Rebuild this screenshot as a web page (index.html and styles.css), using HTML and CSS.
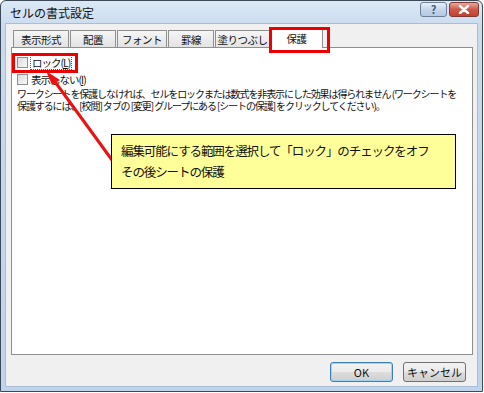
FILE: index.html
```html
<!DOCTYPE html>
<html lang="ja">
<head>
    <meta charset="UTF-8">
    <title>セルの書式設定</title>
    <link rel="stylesheet" href="styles.css">
</head>
<body>
    <div class="window">
        <div class="titlebar">
            <span class="title">セルの書式設定</span>
            <div class="caption-buttons">
                <span class="cap-btn help">?</span>
                <span class="cap-btn close">
                    <svg width="14" height="9" viewBox="0 0 14 9"><path d="M3 1 L11 8 M11 1 L3 8" stroke="#fff" stroke-width="2.4" stroke-linecap="round"/></svg>
                </span>
            </div>
        </div>
        <div class="client">
            <div class="tabs">
                <div class="tab t1">表示形式</div>
                <div class="tab t2">配置</div>
                <div class="tab t3">フォント</div>
                <div class="tab t4">罫線</div>
                <div class="tab t5">塗りつぶし</div>
                <div class="tab active">保護</div>
            </div>
            <div class="panel">
                <label class="check-row">
                    <span class="box"></span><span class="focus">ロック(<u>L</u>)</span>
                </label>
                <label class="check-row">
                    <span class="box"></span><span>表示しない(<u>I</u>)</span>
                </label>
                <p class="note">ワークシートを保護しなければ、セルをロックまたは数式を非表示にした効果は得られません (ワークシートを<br>保護するには、[校閲] タブの [変更] グループにある [シートの保護] をクリックしてください)。</p>
            </div>
            <div class="footer">
                <button class="btn default">OK</button>
                <button class="btn">キャンセル</button>
            </div>
        </div>

        <!-- annotations drawn over the dialog -->
        <div class="mark mark-tab"></div>
        <div class="mark mark-lock"></div>
        <svg class="arrow" width="484" height="393" viewBox="0 0 484 393">
            <line x1="53" y1="79" x2="112" y2="160" stroke="#ee1111" stroke-width="3"/>
            <polygon points="46,71 60,80 52,85" fill="#ee1111"/>
        </svg>
        <div class="callout">編集可能にする範囲を選択して「ロック」のチェックをオフ<br>その後シートの保護</div>
    </div>
</body>
</html>
```

FILE: styles.css
```css
* {
    box-sizing: border-box;
}

body {
    margin: 0;
    font-family: "Noto Sans CJK JP", "Liberation Sans", sans-serif;
    background: #ffffff;
}

.window {
    position: relative;
    width: 483px;
    height: 392px;
    border: 1px solid #3c4a58;
    border-radius: 6px 6px 0 0;
    background: linear-gradient(#dce8f5, #c7daee 30px, #bfd4eb);
    padding: 0 4px 4px 4px;
    display: flex;
    flex-direction: column;
}

.titlebar {
    height: 22px;
    display: flex;
    align-items: center;
    justify-content: space-between;
    padding-left: 5px;
}

.title {
    font-size: 12px;
    color: #111;
}

.caption-buttons {
    display: flex;
    gap: 2px;
    margin-top: -6px;
    margin-right: -1px;
}

.cap-btn {
    height: 15px;
    border: 1px solid #6d7f96;
    border-radius: 3px;
    display: flex;
    align-items: center;
    justify-content: center;
}

.help {
    width: 27px;
    background: linear-gradient(#e9f0f8, #c6d6ea 50%, #b3c8e2);
    font-size: 11px;
    font-weight: bold;
    color: #3d5a80;
}

.close {
    width: 30px;
    border-color: #7c3a33;
    background: linear-gradient(#e9a99e, #d0574a 50%, #c2402f);
}

.client {
    flex: 1;
    background: #f0f0f0;
    padding: 4px 4px 0 5px;
    border: 1px solid #a9bdd4;
}

.tabs {
    display: flex;
    align-items: flex-end;
    height: 19px;
    padding-left: 2px;
    font-size: 10.5px;
    letter-spacing: -0.5px;
    white-space: nowrap;
}

.tab {
    height: 17px;
    border: 1px solid #8e8f8f;
    border-bottom: none;
    margin-right: 1px;
    background: linear-gradient(#f6f6f6, #e3e3e3);
    display: flex;
    align-items: center;
    justify-content: center;
    color: #111;
}

.t1 { width: 56px; }
.t2 { width: 46px; }
.t3 { width: 50px; }
.t4 { width: 46px; }
.t5 { width: 55px; }

.tab.active {
    width: 53px;
    height: 20px;
    background: #ffffff;
    position: relative;
    top: 1px;
    margin-left: -1px;
}

.panel {
    height: 308px;
    background: #ffffff;
    border: 1px solid #8e8f8f;
    padding: 6px 6px 0 5px;
    font-size: 10.5px;
    color: #111;
}

.check-row {
    display: flex;
    align-items: center;
    gap: 3px;
    height: 17px;
    line-height: 13px;
    letter-spacing: -1px;
}

.box {
    width: 11px;
    height: 11px;
    border: 1px solid #8f8f8f;
    background: linear-gradient(135deg, #dcdcdc, #f8f8f8);
}

.focus {
    outline: 1px dotted #555;
    padding: 0 1px;
}

.note {
    margin: 0;
    font-size: 10px;
    line-height: 12px;
    letter-spacing: -1.1px;
    white-space: nowrap;
}

.footer {
    display: flex;
    justify-content: flex-end;
    gap: 10px;
    padding: 7px 7px 0 0;
}

.btn {
    width: 63px;
    height: 20px;
    font-family: inherit;
    font-size: 11px;
    color: #111;
    border: 1px solid #707070;
    border-radius: 3px;
    background: linear-gradient(#f2f2f2, #ebebeb 50%, #dddddd 51%, #cfcfcf);
    padding: 0;
}

.btn.default {
    border-color: #3c7fb1;
    box-shadow: inset 0 0 0 1px #9fd4f3;
}

.mark {
    position: absolute;
    border: 3px solid #ee0000;
}

.mark-tab {
    left: 268px;
    top: 26px;
    width: 61px;
    height: 26px;
}

.mark-lock {
    left: 11px;
    top: 52px;
    width: 66px;
    height: 20px;
}

.arrow {
    position: absolute;
    left: -1px;
    top: -1px;
}

.callout {
    position: absolute;
    left: 110px;
    top: 133px;
    width: 345px;
    height: 55px;
    background: #ffff99;
    border: 1px solid #000;
    padding: 5px 0 0 9px;
    font-size: 12.5px;
    line-height: 21px;
    letter-spacing: -1.1px;
    white-space: nowrap;
    color: #111;
}
```
